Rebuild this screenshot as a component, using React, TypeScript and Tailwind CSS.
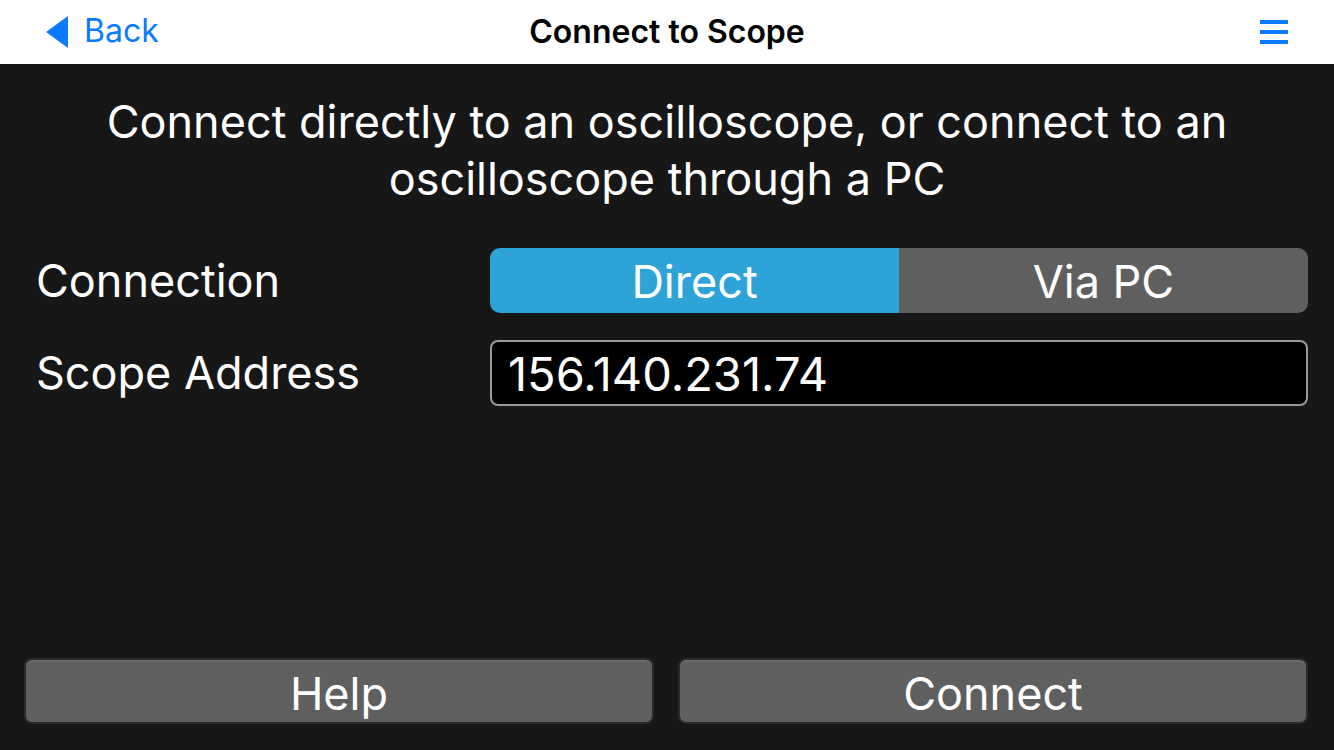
import { useState } from "react";

const font = { fontFamily: "Inter, 'Noto Sans', sans-serif" };

export default function App() {
  const [mode, setMode] = useState<"direct" | "pc">("direct");
  const [address, setAddress] = useState("156.140.231.74");

  return (
    <div className="w-[1334px] h-[750px] flex flex-col bg-[#171717] overflow-hidden" style={font}>
      {/* nav bar */}
      <div className="h-[64px] bg-white flex items-center justify-between px-[46px] relative">
        <button className="flex items-center gap-[16px] text-[#0a7aff] text-[32px]">
          <svg width="22" height="32" viewBox="0 0 22 32">
            <polygon points="22,0 22,32 0,16" fill="#0a7aff" />
          </svg>
          <span className="leading-none pb-[2px]">Back</span>
        </button>
        <div className="absolute left-0 right-0 text-center text-black font-semibold text-[32px] pointer-events-none">
          Connect to Scope
        </div>
        <button className="flex flex-col gap-[6px]" aria-label="Menu">
          <span className="block w-[28px] h-[4px] bg-[#0a7aff]" />
          <span className="block w-[28px] h-[4px] bg-[#0a7aff]" />
          <span className="block w-[28px] h-[4px] bg-[#0a7aff]" />
        </button>
      </div>

      {/* body */}
      <div className="flex-1 flex flex-col px-[26px] pb-[26px]">
        <p className="text-white text-[45px] leading-[57px] text-center mt-[29px]">
          Connect directly to an oscilloscope, or connect to an
          <br />
          oscilloscope through a PC
        </p>

        <div className="flex items-center mt-[41px] h-[65px]">
          <div className="w-[464px] pl-[10px] text-white text-[45px]">Connection</div>
          <div className="flex-1 flex h-full rounded-[10px] overflow-hidden">
            <button
              onClick={() => setMode("direct")}
              className={`flex-1 text-white text-[45px] ${mode === "direct" ? "bg-[#2ea3d8]" : "bg-[#5f5f5f]"}`}
            >
              Direct
            </button>
            <button
              onClick={() => setMode("pc")}
              className={`flex-1 text-white text-[45px] ${mode === "pc" ? "bg-[#2ea3d8]" : "bg-[#5f5f5f]"}`}
            >
              Via PC
            </button>
          </div>
        </div>

        <div className="flex items-center mt-[27px] h-[66px]">
          <div className="w-[464px] pl-[10px] text-white text-[45px]">Scope Address</div>
          <input
            value={address}
            onChange={(e) => setAddress(e.target.value)}
            className="flex-1 h-full bg-black border-[2px] border-[#9a9a9a] rounded-[8px] px-[16px] text-white text-[47px] outline-none"
            style={font}
          />
        </div>

        <div className="flex-1" />

        <div className="flex gap-[24px] -ml-[2px]">
          <button className="flex-1 h-[66px] bg-[#5f5f5f] border-[2px] border-[#2a2a2a] rounded-[8px] text-white text-[45px] shadow-[inset_0_2px_0_rgba(255,255,255,0.08)]">
            Help
          </button>
          <button className="flex-1 h-[66px] bg-[#5f5f5f] border-[2px] border-[#2a2a2a] rounded-[8px] text-white text-[45px] shadow-[inset_0_2px_0_rgba(255,255,255,0.08)]">
            Connect
          </button>
        </div>
      </div>
    </div>
  );
}
